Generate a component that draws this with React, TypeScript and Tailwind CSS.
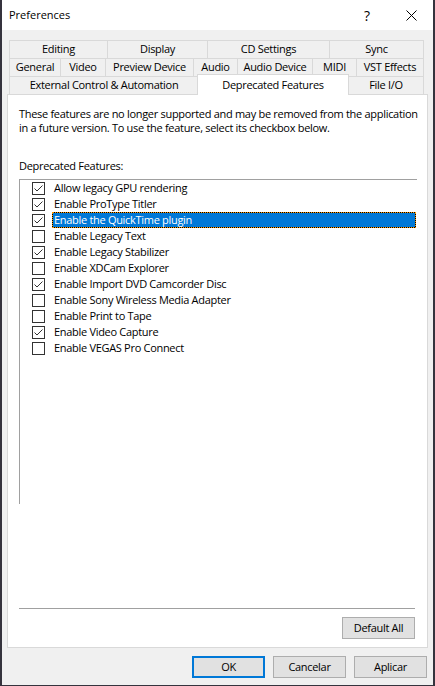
import React from "react";

type Tab = { label: string; w: string; active?: boolean };

const tabRows: Tab[][] = [
  [
    { label: "Editing", w: "w-[98px]" },
    { label: "Display", w: "w-[100px]" },
    { label: "CD Settings", w: "w-[122px]" },
    { label: "Sync", w: "w-[95px]" },
  ],
  [
    { label: "General", w: "w-[51px]" },
    { label: "Video", w: "w-[45px]" },
    { label: "Preview Device", w: "w-[88px]" },
    { label: "Audio", w: "w-[44px]" },
    { label: "Audio Device", w: "w-[75px]" },
    { label: "MIDI", w: "w-[44px]" },
    { label: "VST Effects", w: "w-[68px]" },
  ],
  [
    { label: "External Control & Automation", w: "w-[189px]" },
    { label: "Deprecated Features", w: "w-[152px]", active: true },
    { label: "File I/O", w: "w-[76px]" },
  ],
];

const features = [
  { label: "Allow legacy GPU rendering", checked: true },
  { label: "Enable ProType Titler", checked: true },
  { label: "Enable the QuickTime plugin", checked: true, selected: true },
  { label: "Enable Legacy Text", checked: false },
  { label: "Enable Legacy Stabilizer", checked: true },
  { label: "Enable XDCam Explorer", checked: false },
  { label: "Enable Import DVD Camcorder Disc", checked: true },
  { label: "Enable Sony Wireless Media Adapter", checked: false },
  { label: "Enable Print to Tape", checked: false },
  { label: "Enable Video Capture", checked: true },
  { label: "Enable VEGAS Pro Connect", checked: false },
];

function CheckBox({ checked }: { checked: boolean }) {
  return (
    <div className="w-[13px] h-[13px] shrink-0 border border-[#333333] bg-white">
      {checked && (
        <svg width="11" height="11" viewBox="0 0 11 11" fill="none">
          <path d="M1.5 5.5 L4 8 L9.5 2.5" stroke="#333333" strokeWidth="1" />
        </svg>
      )}
    </div>
  );
}

function Button({ label, focused }: { label: string; focused?: boolean }) {
  return (
    <div
      className={`w-[73px] h-[22px] flex items-center justify-center bg-[#e1e1e1] text-black ${
        focused ? "border-2 border-[#0078d7]" : "border border-[#adadad]"
      }`}
    >
      {label}
    </div>
  );
}

export default function App() {
  return (
    <div
      className="w-[435px] h-[686px] bg-[#f0f0f0] border-l-2 border-r-2 border-b border-[#35333d] text-[11px] tracking-[-0.3px] text-black flex flex-col"
      style={{ fontFamily: '"Open Sans", "Noto Sans", sans-serif' }}
    >
      {/* title bar */}
      <div className="h-[30px] bg-white flex items-center shrink-0 tracking-normal">
        <span className="pl-[7px] flex-1">Preferences</span>
        <span className="text-[14px] mr-[36px]">?</span>
        <svg width="11" height="11" viewBox="0 0 11 11" className="mr-[16px]">
          <path d="M0.5 0.5 L10.5 10.5 M10.5 0.5 L0.5 10.5" stroke="#000" strokeWidth="1" />
        </svg>
      </div>

      {/* tab strip */}
      <div className="mt-[10px] ml-[7px] flex flex-col">
        {tabRows.map((row, r) => (
          <div key={r} className="flex h-[18px]">
            {row.map((t, i) =>
              t.active ? (
                <div
                  key={t.label}
                  className={`${t.w} relative z-10 -mt-[2px] -mx-[1px] h-[21px] bg-white border-x border-t border-[#d9d9d9] flex items-center justify-center`}
                >
                  {t.label}
                </div>
              ) : (
                <div
                  key={t.label}
                  className={`${t.w} h-[18px] border-t border-l border-[#d9d9d9] flex items-center justify-center ${
                    i === row.length - 1 ? "border-r" : ""
                  }`}
                >
                  {t.label}
                </div>
              )
            )}
          </div>
        ))}
      </div>

      {/* page */}
      <div className="ml-[5px] w-[421px] h-[554px] bg-white border border-[#d9d9d9] flex flex-col">
        <p className="mt-[12px] ml-[11px] leading-[14px] whitespace-nowrap">
          These features are no longer supported and may be removed from the application
          <br />
          in a future version. To use the feature, select its checkbox below.
        </p>
        <div className="mt-[24px] ml-[11px] leading-[14px]">Deprecated Features:</div>

        <div className="mt-[6px] ml-[11px] w-[398px] h-[325px] border-t border-l border-[#a0a0a0] flex flex-col">
          {features.map((f) => (
            <div key={f.label} className="h-4 flex items-center">
              <div className="ml-[12px]">
                <CheckBox checked={f.checked} />
              </div>
              {f.selected ? (
                <div className="ml-[7px] mr-[1px] flex-1 h-full bg-black">
                  <div className="h-full border border-dotted border-[#ff9a00] bg-[#0078d7] bg-clip-padding text-white flex items-center pl-[1px]">
                    {f.label}
                  </div>
                </div>
              ) : (
                <div className="ml-[7px] pl-[2px]">{f.label}</div>
              )}
            </div>
          ))}
        </div>

        <div className="mt-[104px] ml-[11px] w-[396px] h-px bg-[#a0a0a0]" />
        <div className="mt-[8px] self-end mr-[12px]">
          <Button label="Default All" />
        </div>
      </div>

      {/* dialog buttons */}
      <div className="mt-[8px] mr-[6px] flex justify-end gap-[8px]">
        <Button label="OK" focused />
        <Button label="Cancelar" />
        <Button label="Aplicar" />
      </div>
    </div>
  );
}
